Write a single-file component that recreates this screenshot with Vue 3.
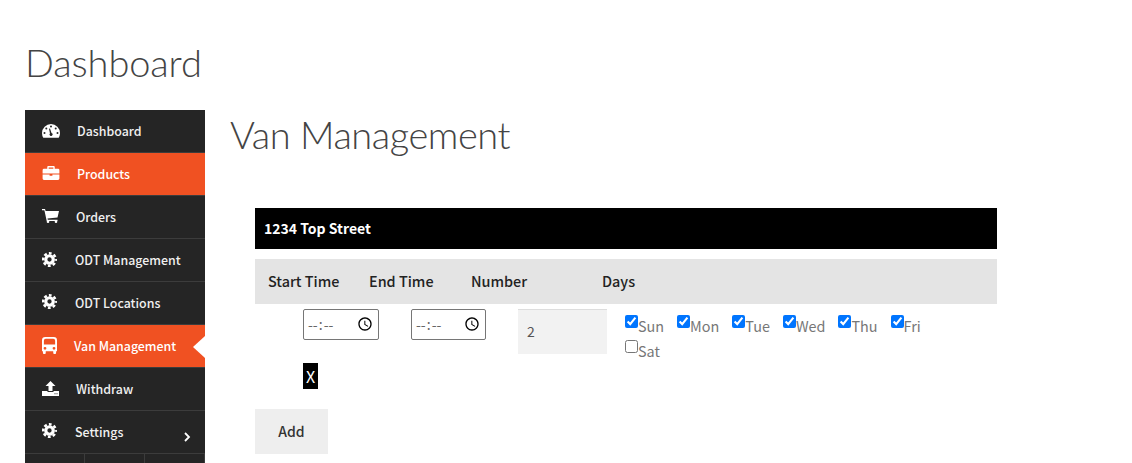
<script setup>
const nav = [
  { label: 'Dashboard', icon: 'gauge', left: 52, top: 14 },
  { label: 'Products', icon: 'case', left: 52, top: 13, active: true },
  { label: 'Orders', icon: 'cart', left: 51, top: 13 },
  { label: 'ODT Management', icon: 'gear', left: 50, top: 13 },
  { label: 'ODT Locations', icon: 'gear', left: 50, top: 12 },
  { label: 'Van Management', icon: 'bus', left: 49, top: 12, active: true, current: true },
  { label: 'Withdraw', icon: 'upload', left: 51, top: 13 },
  { label: 'Settings', icon: 'gear', left: 50, top: 12, more: true }
]
const days = [
  { d: 'Sun', on: true }, { d: 'Mon', on: true }, { d: 'Tue', on: true }, { d: 'Wed', on: true },
  { d: 'Thu', on: true }, { d: 'Fri', on: true }, { d: 'Sat', on: false }
]
</script>

<template>
  <div class="page">
    <h1 class="title">Dashboard</h1>
    <div class="layout">
      <aside class="side">
        <a v-for="n in nav" :key="n.label" class="item" :class="{ active: n.active, current: n.current, more: n.more }">
          <span class="ico" :style="{ top: n.top + 'px' }">
            <svg v-if="n.icon === 'gauge'" viewBox="0 0 18 14" width="18" height="14"><path fill="#fff" fill-rule="evenodd" d="M9 0a9 9 0 0 1 9 9c0 1.800-.5 3.400-1.300 4.800H1.300A9 9 0 0 1 0 9a9 9 0 0 1 9-9ZM9 1.600a1 1 0 1 0 0 2 1 1 0 0 0 0-2ZM4.300 3.400a1 1 0 1 0 0 2 1 1 0 0 0 0-2ZM13.700 3.400a1 1 0 1 0 0 2 1 1 0 0 0 0-2ZM2.500 8a1 1 0 1 0 0 2 1 1 0 0 0 0-2ZM15.500 8a1 1 0 1 0 0 2 1 1 0 0 0 0-2ZM7 4.800l1 4.600a1.500 1.500 0 1 0 1.500-.4L8 4.500Z"/></svg>
            <svg v-else-if="n.icon === 'case'" viewBox="0 0 18 15" width="18" height="14"><path fill="#fff" fill-rule="evenodd" d="M6 0h6a1 1 0 0 1 1 1v2h3.500A1.500 1.500 0 0 1 18 4.500V8H0V4.500A1.500 1.500 0 0 1 1.500 3H5V1a1 1 0 0 1 1-1Zm.500 1.500V3h5V1.500ZM0 9.200h7.500v1.300h3V9.200H18v4.300a1.500 1.500 0 0 1-1.500 1.500h-15A1.500 1.500 0 0 1 0 13.500Z"/></svg>
            <svg v-else-if="n.icon === 'cart'" viewBox="0 0 17 14" width="17" height="14"><path fill="#fff" d="M0 0h3l.6 2H17l-1.500 6.500-10 1 .3 1.200H15.500v1.300H4.700L2.400 1.300H0Z"/><circle cx="6" cy="12.700" r="1.300" fill="#fff"/><circle cx="14" cy="12.700" r="1.300" fill="#fff"/></svg>
            <svg v-else-if="n.icon === 'gear'" viewBox="0 0 16 16" width="15" height="15"><circle cx="8" cy="8" r="6.700" fill="none" stroke="#fff" stroke-width="2.600" stroke-dasharray="2.960 2.300" stroke-dashoffset="1.480"/><circle cx="8" cy="8" r="4" fill="none" stroke="#fff" stroke-width="3.400"/></svg>
            <svg v-else-if="n.icon === 'bus'" viewBox="0 0 16 18" width="15" height="17"><path fill="#fff" fill-rule="evenodd" d="M3.500 0h9A3.500 3.500 0 0 1 16 3.500V15h-1v2a1 1 0 0 1-1 1h-1a1 1 0 0 1-1-1v-2H4v2a1 1 0 0 1-1 1H2a1 1 0 0 1-1-1v-2H0V3.500A3.500 3.500 0 0 1 3.500 0ZM4 1.800a2 2 0 0 0-2 2V8h12V3.800a2 2 0 0 0-2-2ZM3.200 10.500a1.500 1.500 0 1 0 0 3 1.500 1.500 0 0 0 0-3Zm9.600 0a1.500 1.500 0 1 0 0 3 1.500 1.500 0 0 0 0-3Z"/></svg>
            <svg v-else viewBox="0 0 17 15" width="17" height="15"><path fill="#fff" d="M8.500 0 13.500 5H10.500v5h-4V5H3.500Z"/><path fill="#fff" fill-rule="evenodd" d="M0 10h5.500v1h6v-1H17v5H0ZM12.500 12.300v1h1v-1ZM14.500 12.300v1h1v-1Z"/></svg>
          </span>
          <span class="label" :style="{ left: n.left + 'px' }">{{ n.label }}</span>
          <svg v-if="n.more" class="chev" viewBox="0 0 7 10" width="7" height="10"><path d="M1 1l4 4-4 4" fill="none" stroke="#fff" stroke-width="1.800"/></svg>
        </a>
        <div class="tabs"><span></span><span></span><span></span></div>
      </aside>

      <main class="main">
        <h2 class="heading">Van Management</h2>
        <div class="panel">
          <div class="bar">1234 Top Street</div>
          <div class="head">
            <span class="h1">Start Time</span>
            <span class="h2">End Time</span>
            <span class="h3">Number</span>
            <span>Days</span>
          </div>
          <div class="row">
            <div class="left">
              <input class="time t1" type="time" />
              <button class="x" type="button">X</button>
            </div>
            <input class="time t2" type="time" />
            <input class="num" type="text" value="2" />
            <div class="days">
              <label v-for="d in days" :key="d.d" class="day">
                <input type="checkbox" :checked="d.on" /><span>{{ d.d }}</span>
              </label>
            </div>
          </div>
          <button class="add" type="button">Add</button>
        </div>
      </main>
    </div>
  </div>
</template>

<style>
html, body { margin: 0; background: #fff; overflow: hidden; }
</style>

<style scoped>
.page { height: 463px; overflow: hidden; padding-left: 25px; box-sizing: border-box; font-family: "Noto Sans CJK JP", "Noto Sans", sans-serif; }
.title { margin: 0; padding-top: 37px; height: 110px; box-sizing: border-box; font: 300 38px/50px Lato, sans-serif; letter-spacing: -0.1px; color: #444; }
.layout { display: flex; align-items: flex-start; }
.side { width: 180px; flex: none; background: #252525; }
.item { display: block; position: relative; height: 43px; box-sizing: border-box; border-bottom: 1px solid #3c3c3c; color: #f0f0f0; font-size: 12.4px; font-weight: 500; }
.item.active { background: #f05122; color: #fff; }
.ico { position: absolute; left: 17px; display: flex; }
.label { position: absolute; top: 11px; line-height: 20px; white-space: nowrap; }
.current::after { content: ""; position: absolute; right: 0; top: 11px; border: 11px solid transparent; border-left: 0; border-right: 12px solid #fff; }
.chev { position: absolute; left: 159px; top: 21px; }
.tabs { display: flex; height: 30px; }
.tabs span { width: 59px; border-right: 1px solid #3c3c3c; }
.main { padding-left: 25px; flex: 1; }
.heading { margin: -1px 0 0; font: 300 38px/50px Lato, sans-serif; letter-spacing: -0.45px; color: #444; height: 99px; }
.panel { margin-left: 25px; width: 742px; }
.bar { background: #000; color: #fff; height: 41px; line-height: 41px; padding-left: 9px; font-size: 14px; font-weight: 700; }
.head { margin-top: 10px; height: 45px; box-sizing: border-box; padding-bottom: 2px; background: #e4e4e4; display: flex; align-items: center; padding-left: 13px; font-size: 14.4px; font-weight: 500; color: #222; }
.head .h1 { width: 101px; }
.head .h2 { width: 102px; }
.head .h3 { width: 131px; }
.row { display: flex; align-items: flex-start; padding-top: 5px; padding-left: 48px; }
.left { width: 108px; flex: none; }
.time { display: block; box-sizing: border-box; height: 31px; padding: 0 2px 2px 3px; margin: 0; border: 1px solid #767676; border-radius: 2px; background: #fff; font: 14px "Noto Sans CJK JP", sans-serif; color: #666; }
.time::-webkit-datetime-edit-ampm-field { display: none; }
.time::-webkit-calendar-picker-indicator { width: 16px; height: 16px; padding: 0; margin: 0 3px 0 0; background-size: 16px 16px; }
.t1 { width: 76px; }
.t2 { width: 75px; flex: none; }
.x { display: block; margin: 23px 0 0; padding: 0; width: 15px; height: 26px; border: 0; background: #000; color: #fff; font: 16px "Noto Sans CJK JP", sans-serif; }
.num { width: 89px; height: 45px; flex: none; box-sizing: border-box; margin-left: 32px; padding: 0 9px 2px; border: 0; border-top: 1px solid #ddd; background: #f2f2f2; color: #555; font: 14px "Noto Sans CJK JP", sans-serif; outline: 0; }
.days { margin-left: 18px; width: 310px; display: flex; flex-wrap: wrap; column-gap: 13px; }
.day { display: flex; height: 25px; color: #777; font-size: 14.4px; line-height: 20px; }
.day input { margin: 6px 0 0; width: 13px; height: 13px; accent-color: #0075ff; }
.day span { margin-top: 7px; line-height: 20px; }
.add { display: block; margin-top: 20px; width: 73px; height: 45px; padding: 0 0 2px; border: 0; background: #eee; color: #333; font: 500 14px "Noto Sans CJK JP", sans-serif; }
</style>
